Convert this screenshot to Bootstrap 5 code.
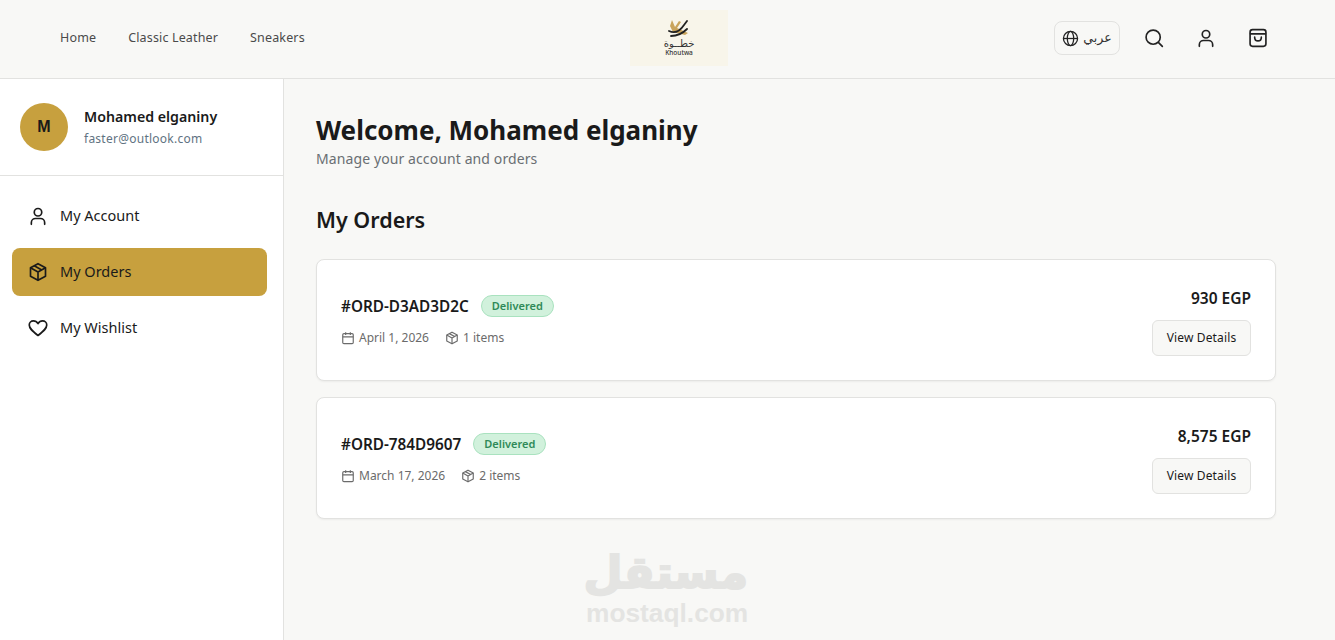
<!DOCTYPE html>
<html lang="en">
<head>
  <meta charset="UTF-8">
  <title>Khoutwa - My Orders</title>
  <link href="https://cdn.jsdelivr.net/npm/bootstrap@5.3.0/dist/css/bootstrap.min.css" rel="stylesheet">
  <style>
    html, body { height: 100%; }
    body {
      font-family: "Noto Sans", "DejaVu Sans", sans-serif;
      background: #f8f8f6;
      color: #1a1a1a;
      overflow: hidden;
    }
    .top-bar {
      height: 79px;
      background: #f8f8f6;
      border-bottom: 1px solid #e2e2e0;
      padding: 0 67px 2px 60px;
    }
    .top-links { width: 570px; gap: 32px; }
    .top-links a {
      color: #4a4a4a;
      font-size: 12.500px;
      letter-spacing: .15px;
      text-decoration: none;
    }
    .logo-box {
      width: 98px;
      height: 56px;
      background: #f8f5ea;
      line-height: 1;
      color: #333;
    }
    .logo-ar { font-family: "DejaVu Sans", sans-serif; font-size: 10px; line-height: 11px; }
    .logo-en { font-size: 6.500px; font-weight: 500; line-height: 7px; }
    .top-actions { gap: 24px; }
    .lang-btn {
      width: 66px;
      height: 34px;
      border: 1px solid #e2e2e0;
      border-radius: 8px;
      font-family: "DejaVu Sans", sans-serif;
      font-size: 12.500px;
      color: #333;
    }
    .side-col {
      width: 284px;
      background: #fff;
      border-right: 1px solid #e2e2e0;
    }
    .profile-box {
      height: 97px;
      padding: 0 20px;
      border-bottom: 1px solid #e2e2e0;
      gap: 16px;
    }
    .avatar-dot {
      width: 48px;
      height: 48px;
      background: #c7a03e;
      font-family: "Liberation Sans", sans-serif;
      font-weight: 700;
      font-size: 16px;
    }
    .profile-name { font-size: 14.200px; font-weight: 600; line-height: 20px; }
    .profile-mail { font-size: 12px; color: #5f7382; letter-spacing: .25px; line-height: 18px; margin-top: 3px; }
    .side-nav { padding: 16px 16px 0 12px; gap: 8px; }
    .side-link {
      height: 48px;
      padding: 0 16px 1px;
      gap: 12px;
      border-radius: 8px;
      color: #1a1a1a;
      font-size: 14.500px;
      text-decoration: none;
    }
    .side-link.is-current { background: #c7a03e; }
    .main-col { padding: 33px 0 0 32px; }
    .page-title { font-size: 26px; font-weight: 700; line-height: 36px; margin: 0; }
    .page-sub { font-size: 14px; color: #6a6f73; line-height: 20px; margin-top: 1px; letter-spacing: .1px; }
    .section-title { font-size: 21.500px; font-weight: 600; line-height: 28px; margin: 37px 0 25px; }
    .order-list { width: 960px; gap: 16px; }
    .order-card {
      height: 122px;
      background: #fff;
      border: 1px solid #e2e2e0;
      border-radius: 8px;
      box-shadow: 0 1px 2px rgba(0,0,0,.05);
      padding: 0 24px;
    }
    .order-id { font-size: 15.300px; font-weight: 600; line-height: 24px; }
    .state-pill {
      height: 22px;
      padding: 1px 10px 0;
      background: #d1f1dc;
      border: 1px solid #a9e2bf;
      border-radius: 11px;
      color: #2f8a58;
      font-size: 11px;
      font-weight: 600;
      margin-left: 12px;
    }
    .order-meta { font-size: 12px; color: #6b6b6b; margin-top: 11px; gap: 16px; }
    .order-meta svg { margin-right: 4px; }
    .order-total { font-size: 15.500px; font-weight: 600; line-height: 28px; margin-bottom: 8px; }
    .detail-btn {
      width: 99px;
      height: 36px;
      padding: 0;
      background: #f8f8f6;
      border: 1px solid #e2e2e0;
      border-radius: 6px;
      font-size: 12px;
      letter-spacing: .15px;
      color: #1a1a1a;
    }
    .mark-wrap {
      position: absolute;
      left: 586px;
      top: 545px;
      width: 162px;
      text-align: center;
      color: #e4e4e2;
      font-weight: 700;
      pointer-events: none;
    }
    .mark-ar {
      font-family: "DejaVu Sans", sans-serif;
      font-size: 45px;
      line-height: 55px;
      -webkit-text-stroke: 2px #e4e4e2;
    }
    .mark-en { font-family: "Liberation Sans", sans-serif; font-size: 26.300px; line-height: 26px; }
  </style>
</head>
<body class="d-flex flex-column">
  <!-- Header -->
  <header class="top-bar d-flex align-items-center flex-shrink-0">
    <nav class="top-links d-flex">
      <a href="#">Home</a>
      <a href="#">Classic Leather</a>
      <a href="#">Sneakers</a>
    </nav>
    <div class="logo-box d-flex flex-column align-items-center justify-content-center">
      <svg width="28" height="18" viewBox="0 0 28 18" fill="none">
        <path d="M7 0l3 7 4-6 2 1-4 6 11 5-3 2-12-3-3-6z" fill="#c9a45c"/>
        <path d="M4 11c6 3 11 0 15-6l3-4M6 16c6 0 12-3 16-7" stroke="#222" stroke-width="1.800" stroke-linecap="round"/>
      </svg>
      <div class="logo-ar" dir="rtl">خطــوة</div>
      <div class="logo-en">Khoutwa</div>
    </div>
    <div class="top-actions d-flex align-items-center ms-auto">
      <div class="lang-btn d-flex align-items-center justify-content-center gap-1">
        <svg width="17" height="17" viewBox="0 0 24 24" fill="none" stroke="#222" stroke-width="1.800"><circle cx="12" cy="12" r="10"/><ellipse cx="12" cy="12" rx="4.500" ry="10"/><path d="M2 12h20"/></svg>
        <span>عربي</span>
      </div>
      <svg width="20" height="20" viewBox="0 0 24 24" fill="none" stroke="#222" stroke-width="2" stroke-linecap="round"><circle cx="11" cy="11" r="8.500"/><path d="M17.500 17.500L22 22"/></svg>
      <svg width="36" height="20" viewBox="0 0 24 24" fill="none" stroke="#222" stroke-width="2" stroke-linecap="round"><circle cx="12" cy="7.500" r="4.500"/><path d="M4 22v-2c0-3 2.500-5 5-5h6c2.500 0 5 2 5 5v2"/></svg>
      <svg width="20" height="20" viewBox="0 0 24 24" fill="none" stroke="#222" stroke-width="2" stroke-linecap="round" stroke-linejoin="round"><rect x="2.500" y="2" width="19" height="20" rx="3"/><path d="M3 7h18M8 11c0 6 8 6 8 0"/></svg>
    </div>
  </header>

  <div class="d-flex flex-grow-1">
    <!-- Sidebar -->
    <aside class="side-col flex-shrink-0">
      <div class="profile-box d-flex align-items-center">
        <div class="avatar-dot rounded-circle d-flex align-items-center justify-content-center">M</div>
        <div>
          <div class="profile-name">Mohamed elganiny</div>
          <div class="profile-mail">faster@outlook.com</div>
        </div>
      </div>
      <nav class="side-nav d-flex flex-column">
        <a class="side-link d-flex align-items-center" href="#">
          <svg width="20" height="20" viewBox="0 0 24 24" fill="none" stroke="#1a1a1a" stroke-width="2" stroke-linecap="round"><circle cx="12" cy="7.500" r="4.500"/><path d="M4 22v-2c0-3 2.500-5 5-5h6c2.500 0 5 2 5 5v2"/></svg>
          My Account
        </a>
        <a class="side-link is-current d-flex align-items-center" href="#">
          <svg width="20" height="20" viewBox="0 0 24 24" fill="none" stroke="#1a1a1a" stroke-width="2" stroke-linejoin="round"><path d="M12 2l9 5v10l-9 5-9-5V7z"/><path d="M3 7l9 5 9-5M12 12v10M7.500 4.500l9 5"/></svg>
          My Orders
        </a>
        <a class="side-link d-flex align-items-center" href="#">
          <svg width="20" height="20" viewBox="0 0 24 24" fill="none" stroke="#1a1a1a" stroke-width="2" stroke-linejoin="round"><path d="M12 21C5 15.500 1.500 12.500 1.500 8.500 1.500 5.500 3.800 3.500 6.500 3.500c2.200 0 4.200 1.200 5.500 3.300 1.300-2.100 3.300-3.300 5.500-3.300 2.700 0 5 2 5 5 0 4-3.500 7-10.500 12.500z"/></svg>
          My Wishlist
        </a>
      </nav>
    </aside>

    <!-- Main -->
    <main class="main-col flex-grow-1">
      <h1 class="page-title">Welcome, Mohamed elganiny</h1>
      <div class="page-sub">Manage your account and orders</div>
      <h2 class="section-title">My Orders</h2>
      <div class="order-list d-flex flex-column">
        <div class="order-card d-flex align-items-center justify-content-between">
          <div>
            <div class="d-flex align-items-center">
              <span class="order-id">#ORD-D3AD3D2C</span>
              <span class="state-pill d-inline-flex align-items-center">Delivered</span>
            </div>
            <div class="order-meta d-flex">
              <span class="d-flex align-items-center">
                <svg width="14" height="14" viewBox="0 0 24 24" fill="none" stroke="#6b6b6b" stroke-width="2"><rect x="3" y="4.500" width="18" height="17" rx="2"/><path d="M3 10h18M8 2v5M16 2v5"/></svg>
                April 1, 2026
              </span>
              <span class="d-flex align-items-center">
                <svg width="14" height="14" viewBox="0 0 24 24" fill="none" stroke="#6b6b6b" stroke-width="2" stroke-linejoin="round"><path d="M12 2l9 5v10l-9 5-9-5V7z"/><path d="M3 7l9 5 9-5M12 12v10M7.500 4.500l9 5"/></svg>
                1 items
              </span>
            </div>
          </div>
          <div class="d-flex flex-column align-items-end">
            <div class="order-total">930 EGP</div>
            <button class="btn detail-btn" type="button">View Details</button>
          </div>
        </div>
        <div class="order-card d-flex align-items-center justify-content-between">
          <div>
            <div class="d-flex align-items-center">
              <span class="order-id">#ORD-784D9607</span>
              <span class="state-pill d-inline-flex align-items-center">Delivered</span>
            </div>
            <div class="order-meta d-flex">
              <span class="d-flex align-items-center">
                <svg width="14" height="14" viewBox="0 0 24 24" fill="none" stroke="#6b6b6b" stroke-width="2"><rect x="3" y="4.500" width="18" height="17" rx="2"/><path d="M3 10h18M8 2v5M16 2v5"/></svg>
                March 17, 2026
              </span>
              <span class="d-flex align-items-center">
                <svg width="14" height="14" viewBox="0 0 24 24" fill="none" stroke="#6b6b6b" stroke-width="2" stroke-linejoin="round"><path d="M12 2l9 5v10l-9 5-9-5V7z"/><path d="M3 7l9 5 9-5M12 12v10M7.500 4.500l9 5"/></svg>
                2 items
              </span>
            </div>
          </div>
          <div class="d-flex flex-column align-items-end">
            <div class="order-total">8,575 EGP</div>
            <button class="btn detail-btn" type="button">View Details</button>
          </div>
        </div>
      </div>
    </main>
  </div>

  <!-- Watermark -->
  <div class="mark-wrap">
    <div class="mark-ar" dir="rtl">مستقل</div>
    <div class="mark-en">mostaql.com</div>
  </div>

  <script src="https://cdn.jsdelivr.net/npm/bootstrap@5.3.0/dist/js/bootstrap.bundle.min.js"></script>
</body>
</html>
